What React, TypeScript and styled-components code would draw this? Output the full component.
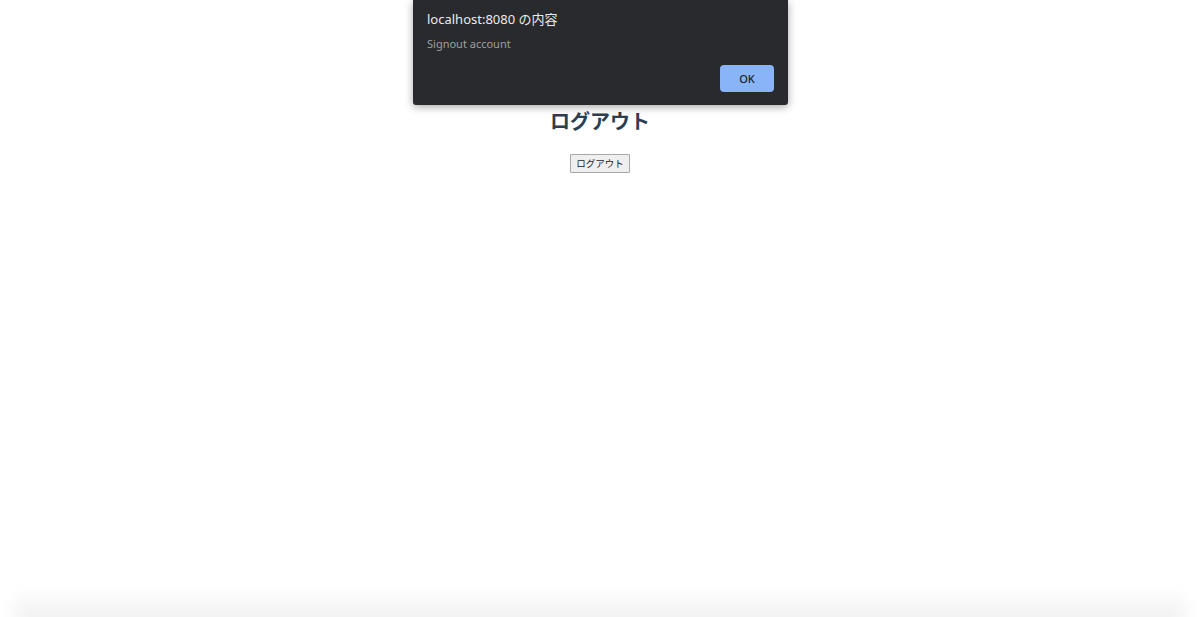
import React from 'react'
import styled, { createGlobalStyle } from 'styled-components'

const GlobalStyle = createGlobalStyle`
  html, body {
    margin: 0;
    padding: 0;
    background: #ffffff;
    height: 100%;
  }
  #root {
    height: 100%;
  }
`

const Page = styled.div`
  position: relative;
  height: 617px;
  overflow: hidden;
  display: flex;
  flex-direction: column;
  align-items: center;
  font-family: "Noto Sans", "Noto Sans CJK JP", sans-serif;
  color: #2c3e50;
`

const Content = styled.main`
  flex: 1;
  display: flex;
  flex-direction: column;
  align-items: center;
  padding-top: 105px;
`

const Title = styled.h2`
  margin: 0;
  font-size: 20px;
  line-height: 32px;
  font-weight: 700;
  font-family: "Noto Sans CJK JP", sans-serif;
  color: #2c3e50;
`

const LogoutButton = styled.button`
  margin-top: 17px;
  height: 19px;
  padding: 0 5px;
  font-size: 9.5px;
  font-family: "Noto Sans CJK JP", sans-serif;
  color: #222;
  background: #efefef;
  border: 1px solid #a8a8a8;
  border-radius: 1px;
  line-height: 17px;
`

const BottomShade = styled.div`
  height: 36px;
  width: calc(100% - 30px);
  margin-bottom: -8px;
  background: linear-gradient(to bottom, rgba(0,0,0,0) 0%, rgba(0,0,0,0.075) 100%);
  filter: blur(8px);
`

const Dialog = styled.div`
  position: absolute;
  top: 0;
  left: 413px;
  width: 375px;
  height: 105px;
  box-sizing: border-box;
  background: #292a2d;
  border-radius: 0 0 3px 3px;
  box-shadow: 0 2px 8px rgba(0, 0, 0, 0.35);
  padding: 10px 14px 14px 14px;
  display: flex;
  flex-direction: column;
  font-family: "Noto Sans", "Noto Sans CJK JP", sans-serif;
`

const DialogTitle = styled.div`
  font-size: 13px;
  line-height: 18px;
  color: #e8eaed;
`

const DialogMessage = styled.div`
  margin-top: 7px;
  font-size: 11px;
  line-height: 17px;
  color: #9aa0a6;
`

const Actions = styled.div`
  margin-top: auto;
  display: flex;
  justify-content: flex-end;
`

const OkButton = styled.button`
  width: 54px;
  height: 27px;
  margin-bottom: -1px;
  background: #8ab4f8;
  color: #202124;
  border: none;
  border-radius: 4px;
  font-family: "Noto Sans", sans-serif;
  font-size: 11px;
  font-weight: 500;
`

export default function App() {
  return (
    <>
      <GlobalStyle />
      <Page>
        <Content>
          <Title>ログアウト</Title>
          <LogoutButton>ログアウト</LogoutButton>
        </Content>
        <BottomShade />
        <Dialog>
          <DialogTitle>localhost:8080 の内容</DialogTitle>
          <DialogMessage>Signout account</DialogMessage>
          <Actions>
            <OkButton>OK</OkButton>
          </Actions>
        </Dialog>
      </Page>
    </>
  )
}
